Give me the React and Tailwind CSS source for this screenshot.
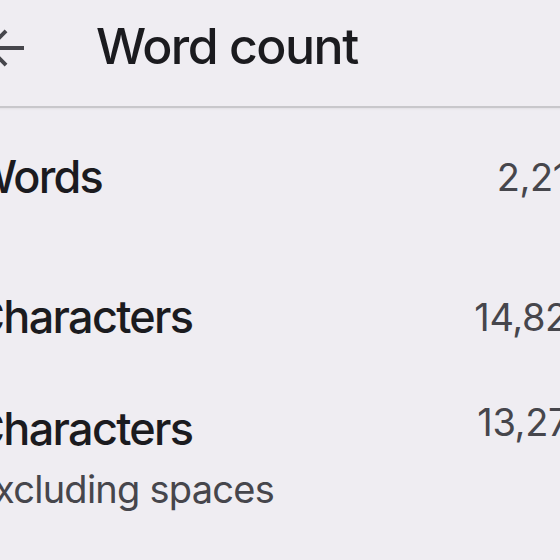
import { useState } from 'react';

const font = { fontFamily: 'Inter, "Noto Sans", sans-serif' };

function StatRow({ label, sub, value, className = '', valueClass = 'pt-[4px]' }) {
  return (
    <div className={`flex items-start justify-between ${className}`}>
      <div className="flex flex-col">
        <span className="text-[45px] leading-[54px] font-[450] tracking-[-1.7px] text-[#1b1b1f]">{label}</span>
        {sub && (
          <span className="mt-[6px] text-[38px] leading-[54px] tracking-[-0.75px] text-[#46464c]">{sub}</span>
        )}
      </div>
      <span className={`text-[38px] leading-[46px] tracking-[-0.4px] text-[#46464c] ${valueClass}`}>{value}</span>
    </div>
  );
}

export default function App() {
  const [stats] = useState([
    { label: 'Words', value: '2,218' },
    { label: 'Characters', value: '14,826', className: 'mt-[86px]' },
    { label: 'Characters', sub: 'Excluding spaces', value: '13,274', className: 'mt-[58px]', valueClass: '-mt-[3px]' },
  ]);

  return (
    <div className="h-[560px] w-[560px] overflow-hidden bg-[#efedf2]" style={font}>
      <div className="-ml-[32px] w-[623px]">
        {/* top bar */}
        <div className="flex h-[108px] items-center gap-[72px] border-b-2 border-[#c8c7cb] pb-[14px] shadow-[0_1px_2px_rgba(0,0,0,0.06)]">
          <svg width="56" height="56" viewBox="0 0 24 24" className="mt-[4px] shrink-0 text-[#46464c]">
            <path d="M24 12H9M16.3 4.7 9 12l7.3 7.3" fill="none" stroke="currentColor" strokeWidth="1.7" />
          </svg>
          <h1 className="text-[50px] leading-none font-[450] tracking-[-1.5px] text-[#1b1b1f]">Word count</h1>
        </div>

        <div className="flex flex-col pl-[4px] pt-[42px]">
          {stats.map((s, i) => (
            <StatRow key={i} {...s} />
          ))}
        </div>
      </div>
    </div>
  );
}
